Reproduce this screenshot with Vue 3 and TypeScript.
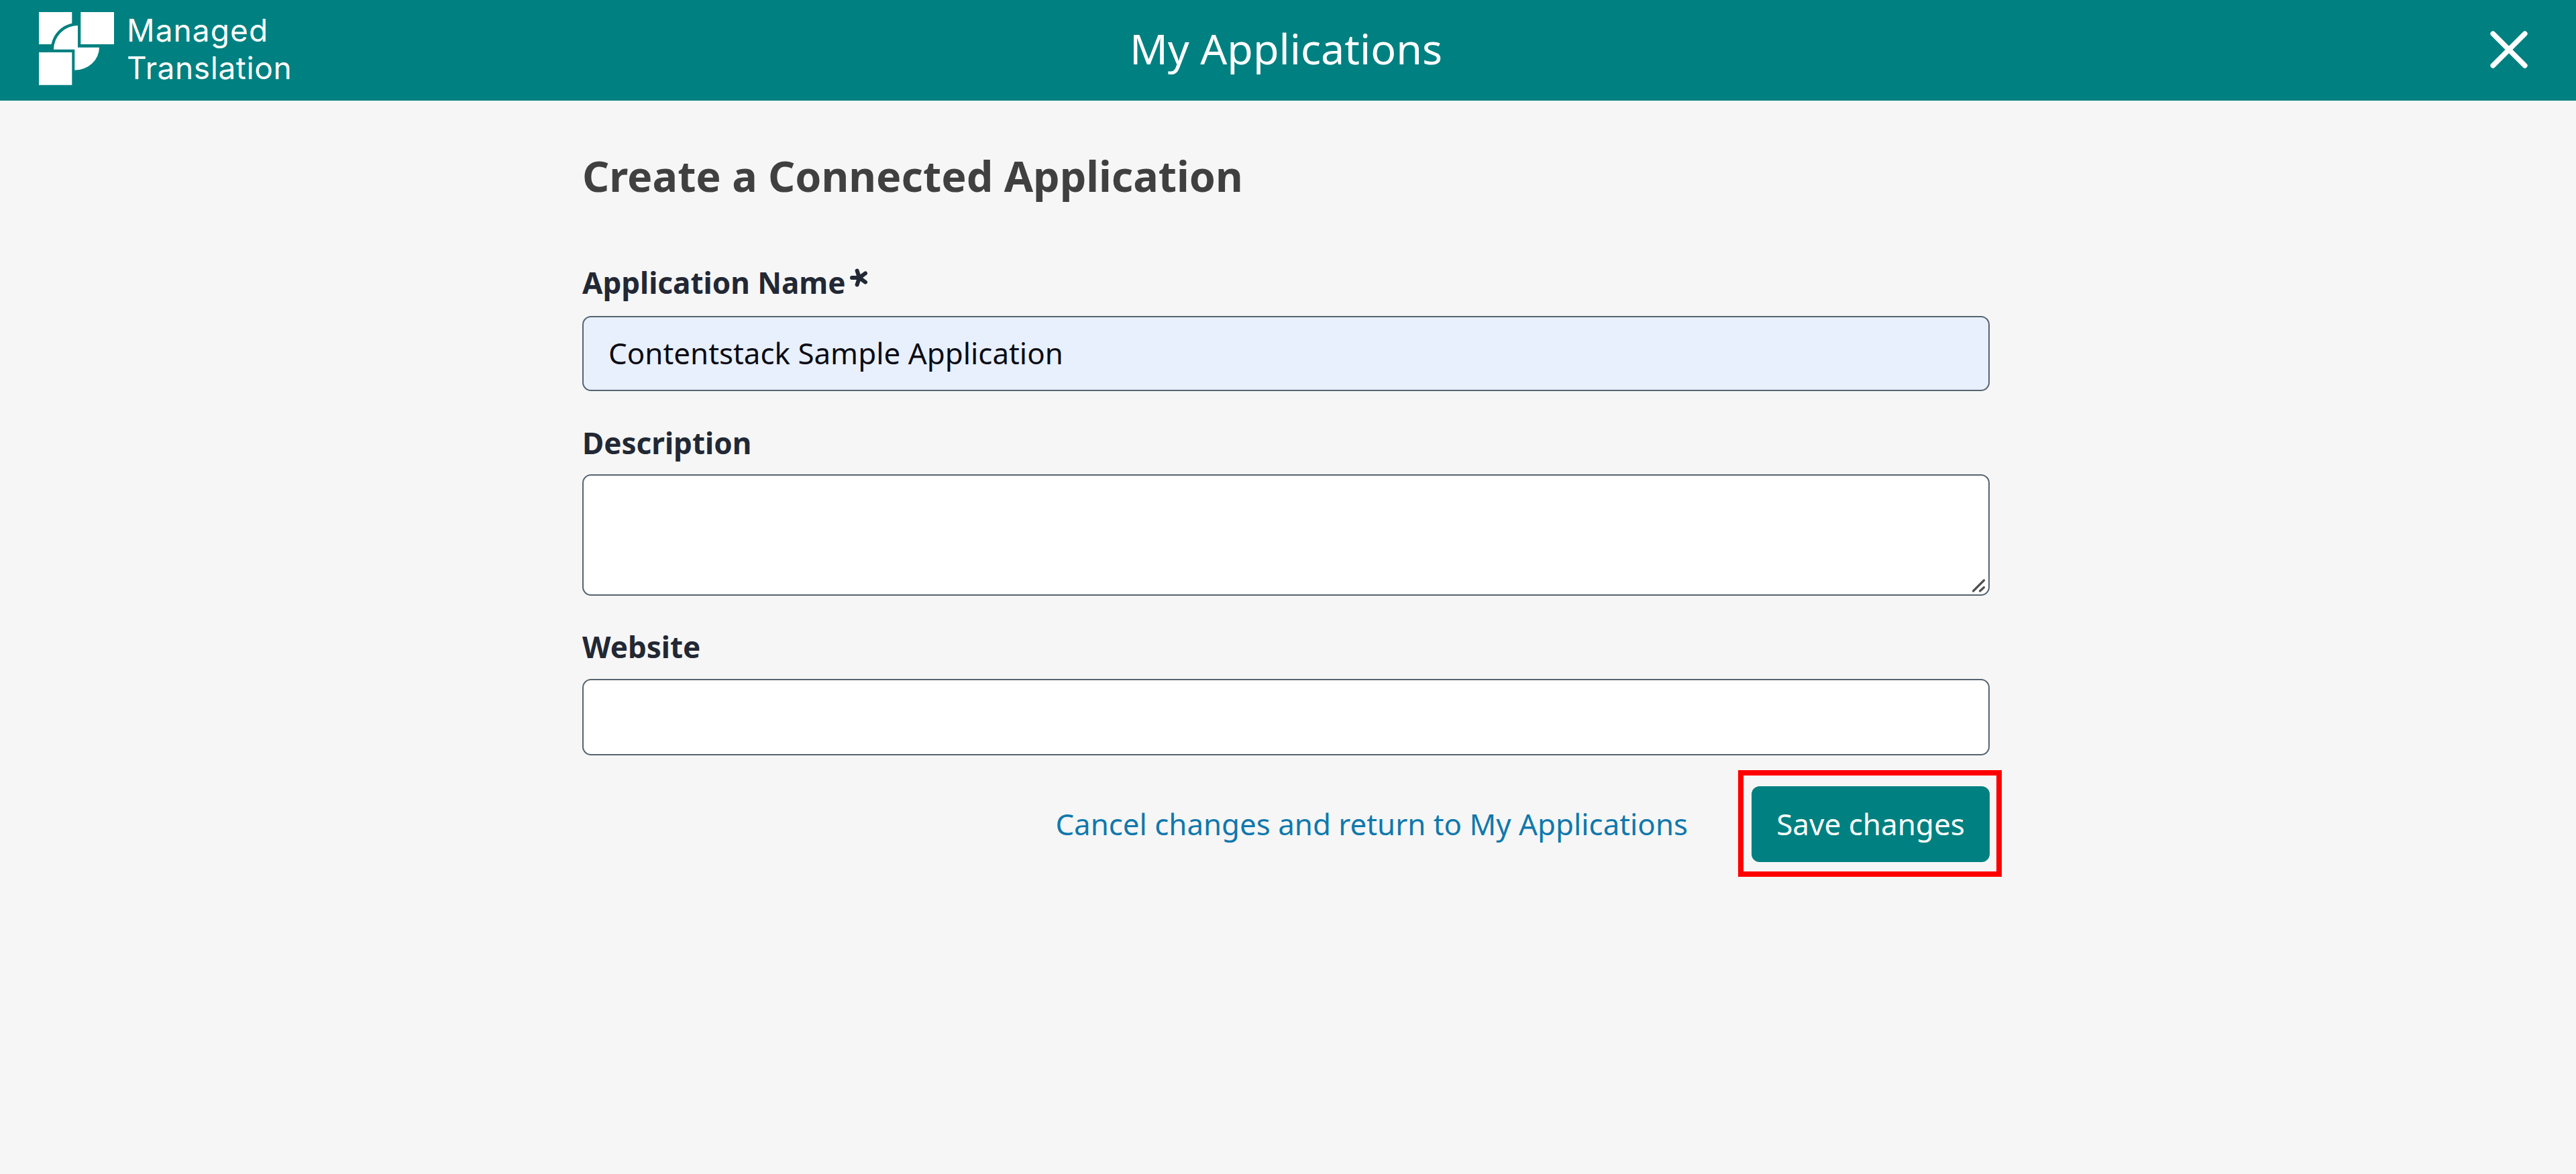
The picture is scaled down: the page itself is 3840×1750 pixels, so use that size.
<script setup lang="ts">
import { ref } from 'vue'

const applicationName = ref('Contentstack Sample Application')
const description = ref('')
const website = ref('')
</script>

<template>
  <div class="page">
    <header class="topbar">
      <a class="brand" aria-label="Managed Translation">
        <svg class="brand-mark" width="112" height="109" viewBox="0 0 112 109" fill="#fff" aria-hidden="true">
          <path d="M0 0H49.3V16.7A40 40 0 0 0 18.5 48H0Z" />
          <path d="M62.3 0H112V48H62.3Z" />
          <path d="M0 60H49.3V108.7H0Z" />
          <path d="M22 55.7A36 36 0 0 1 58 20V52.7H90A36.5 34 0 0 1 53.3 86.5V55.7Z" />
        </svg>
        <span class="brand-name">
          <span class="brand-managed">Managed</span>
          <span class="brand-translation">Translation</span>
        </span>
      </a>
      <h1 class="topbar-title">My Applications</h1>
      <button class="close" type="button" aria-label="Close">
        <svg width="56" height="56" viewBox="0 0 56 56" fill="none" stroke="#fff" stroke-width="7.6" stroke-linecap="round">
          <path d="M4.2 4.2 51.8 51.8M51.8 4.2 4.2 51.8" />
        </svg>
      </button>
    </header>

    <main class="content">
      <h2 class="heading">Create a Connected Application</h2>
      <form class="form" @submit.prevent>
        <div class="field field-name">
          <label class="label" for="name">
            Application Name
            <svg class="required" width="30" height="30" viewBox="0 0 30 30" fill="none" stroke="#222834" stroke-width="6" stroke-linecap="round" aria-label="required">
              <path d="M15 15H4M15 15 11.6 4.5M15 15 24 8.4M15 15 24 21.6M15 15 11.6 25.5" />
            </svg>
          </label>
          <input id="name" v-model="applicationName" class="control autofilled" type="text" />
        </div>
        <div class="field field-description">
          <label class="label" for="description">Description</label>
          <div class="textarea-wrap">
            <textarea id="description" v-model="description" class="control area"></textarea>
            <svg class="grip" width="22" height="22" viewBox="0 0 22 22" fill="none" stroke="#505050" stroke-width="3.2" stroke-linecap="round">
              <path d="M2.5 19 18.5 3M12.5 19 18.5 13.5" />
            </svg>
          </div>
        </div>
        <div class="field field-website">
          <label class="label" for="website">Website</label>
          <input id="website" v-model="website" class="control" type="text" />
        </div>
        <div class="actions">
          <a class="cancel">Cancel changes and return to My Applications</a>
          <div class="save-wrap">
            <button class="save" type="submit">Save changes</button>
            <span class="highlight"></span>
          </div>
        </div>
      </form>
    </main>
  </div>
</template>

<style>
body {
  background: #f6f6f6;
}
</style>

<style scoped>
.page {
  min-height: 1750px;
  background: #f6f6f6;
  font-family: "Noto Sans", "Open Sans", sans-serif;
  font-size: 44px;
  line-height: 60px;
}

.topbar {
  box-sizing: border-box;
  display: grid;
  grid-template-columns: 1fr auto 1fr;
  height: 150px;
  padding: 0 66px 0 58px;
  background: #008080;
  color: #fff;
}

.brand {
  display: flex;
  gap: 19px;
  padding-top: 18px;
  color: #fff;
}

.brand-mark {
  flex: none;
}

.brand-name {
  display: flex;
  flex-direction: column;
  margin-top: -1px;
  font-family: Inter, sans-serif;
  font-size: 46px;
  font-weight: 400;
  line-height: 56px;
}

.brand-managed {
  letter-spacing: 1.1px;
}

.brand-translation {
  letter-spacing: 0.6px;
}

.topbar-title {
  margin: 0;
  padding-left: 2px;
  font-size: 62.8px;
  font-weight: 400;
  line-height: 144px;
}

.close {
  display: flex;
  justify-self: end;
  align-self: start;
  margin: 46px 6px 0 0;
  padding: 0;
  border: 0;
  background: none;
}

.content {
  box-sizing: border-box;
  width: 2966px;
  padding: 72px 0 0 868px;
}

.heading {
  margin: 0 0 89px;
  color: #404040;
  font-size: 62.75px;
  font-weight: 700;
  line-height: 80px;
}

.form {
  display: flex;
  flex-direction: column;
}

.field {
  display: flex;
  flex-direction: column;
}

.field-name {
  gap: 20px;
  margin-bottom: 47px;
}

.field-description {
  gap: 17px;
  margin-bottom: 46px;
}

.field-website {
  gap: 18px;
}

.label {
  display: flex;
  height: 60px;
  color: #222834;
  font-weight: 700;
}

.required {
  flex: none;
  margin: 8px 0 0 5.5px;
}

.control {
  box-sizing: border-box;
  width: 100%;
  height: 114px;
  margin: 0;
  padding: 0 37px 3px;
  border: 2px solid #566470;
  border-radius: 13px;
  outline: none;
  background: #fff;
  color: #0c0c14;
  font: inherit;
  font-size: 43.9px;
}

.field-name .control {
  height: 112px;
}

.control.autofilled {
  background: #e8f0fe;
}

.textarea-wrap {
  position: relative;
  height: 181px;
}

.control.area {
  display: block;
  height: 181px;
  resize: none;
}

.grip {
  position: absolute;
  right: 5px;
  bottom: 4px;
}

.actions {
  display: flex;
  justify-content: flex-end;
  align-items: center;
  gap: 95px;
  margin-top: 46px;
}

.cancel {
  padding-bottom: 2px;
  color: #1078ac;
  font-size: 43.85px;
}

.save-wrap {
  position: relative;
}

.save {
  display: block;
  width: 355px;
  height: 113px;
  padding: 0 0 2px;
  border: 0;
  border-radius: 12px;
  background: #008080;
  color: #fff;
  font: inherit;
}

.highlight {
  position: absolute;
  inset: -24px -18px -22px -20px;
  border: 8px solid #f00;
  pointer-events: none;
}
</style>
